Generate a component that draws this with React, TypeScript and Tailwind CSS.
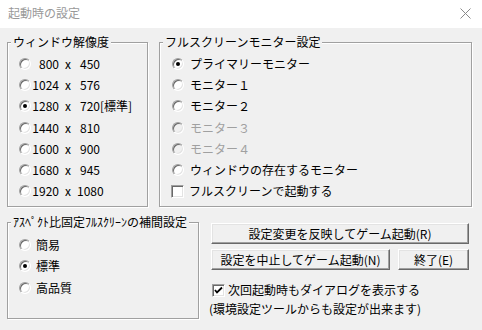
import React from "react";

const FONT = "font-['Noto_Sans_CJK_JP','Noto_Sans_CJK_SC',sans-serif]";

function Radio({ checked = false, disabled = false }: { checked?: boolean; disabled?: boolean }) {
  return (
    <span
      className={
        "shrink-0 w-[12px] h-[12px] rounded-full border border-t-[#a0a0a0] border-l-[#a0a0a0] border-b-white border-r-white shadow-[inset_1px_1px_0_#696969,inset_-1px_-1px_0_#e3e3e3] flex items-center justify-center " +
        (disabled ? "bg-[#f0f0f0]" : "bg-white")
      }
    >
      {checked && <span className="w-[4px] h-[4px] rounded-full bg-black" />}
    </span>
  );
}

function Check({ checked = false }: { checked?: boolean }) {
  return (
    <span className="shrink-0 w-[13px] h-[13px] bg-white border border-t-[#a0a0a0] border-l-[#a0a0a0] border-b-white border-r-white shadow-[inset_1px_1px_0_#696969,inset_-1px_-1px_0_#e3e3e3] flex items-center justify-center">
      {checked && (
        <svg width="9" height="9" viewBox="0 0 9 9">
          <polyline points="1,4 3,6.5 8,1.5" fill="none" stroke="#000" strokeWidth="1.8" />
        </svg>
      )}
    </span>
  );
}

function Group({
  label,
  className,
  children,
}: {
  label: string;
  className: string;
  children: React.ReactNode;
}) {
  return (
    <div
      className={
        "border border-[#a0a0a0] shadow-[1px_1px_0_0_#ffffff,inset_1px_1px_0_0_#ffffff] flex flex-col " +
        className
      }
    >
      <div className="-mt-[8px] h-[14px] ml-[3px] self-start px-[2px] bg-[#f0f0f0] leading-[14px] whitespace-nowrap">
        {label}
      </div>
      {children}
    </div>
  );
}

function Button({ className, children }: { className: string; children: React.ReactNode }) {
  return (
    <div
      className={
        "h-[21px] bg-[#f0f0f0] border border-t-white border-l-white border-r-[#696969] border-b-[#696969] shadow-[inset_-1px_-1px_0_#a0a0a0,inset_1px_1px_0_#e3e3e3] flex items-center justify-center leading-[14px] " +
        className
      }
    >
      {children}
    </div>
  );
}

const resolutions: [string, string, boolean?][] = [
  ["800", "450"],
  ["1024", "576"],
  ["1280", "720", true],
  ["1440", "810"],
  ["1600", "900"],
  ["1680", "945"],
  ["1920", "1080"],
];

const monitors: { label: string; checked?: boolean; disabled?: boolean }[] = [
  { label: "プライマリーモニター", checked: true },
  { label: "モニター１" },
  { label: "モニター２" },
  { label: "モニター３", disabled: true },
  { label: "モニター４", disabled: true },
  { label: "ウィンドウの存在するモニター" },
];

export default function App() {
  return (
    <div className={"w-[482px] h-[330px] bg-[#f0f0f0] flex flex-col text-[12px] text-black overflow-hidden " + FONT}>
      {/* title bar */}
      <div className="h-[28px] bg-white flex items-center justify-between pl-[8px] pr-[11px] shrink-0">
        <span className="text-[12px] text-[#999999] leading-[14px] -mt-[2px]">起動時の設定</span>
        <svg width="11" height="11" viewBox="0 0 11 11" className="-mt-[2px]">
          <path d="M0.5 0.5 L10.5 10.5 M10.5 0.5 L0.5 10.5" stroke="#8a8a8a" strokeWidth="1" fill="none" />
        </svg>
      </div>

      {/* row 1 */}
      <div className="flex pl-[7px] gap-[11px] mt-[14px]">
        <Group label="ウィンドウ解像度" className="w-[141px] h-[165px]">
          <div className="flex flex-col mt-[4px]">
            {resolutions.map(([a, b, std]) => (
              <div key={a} className="h-[21.3px] flex items-center">
                <span className="ml-[11px]">
                  <Radio checked={!!std} />
                </span>
                <span className="w-[28px] text-right leading-[14px]">{a}</span>
                <span className="w-[18px] text-center leading-[14px]">x</span>
                <span className="w-[23px] text-right leading-[14px]">{b}</span>
                {std && <span className="leading-[14px] whitespace-nowrap">[標準]</span>}
              </div>
            ))}
          </div>
        </Group>

        <Group label="フルスクリーンモニター設定" className="w-[313px] h-[165px]">
          <div className="flex flex-col mt-[4px]">
            {monitors.map((m) => (
              <div key={m.label} className="h-[21.3px] flex items-center">
                <span className="ml-[12px]">
                  <Radio checked={m.checked} disabled={m.disabled} />
                </span>
                <span className={"ml-[6px] leading-[14px] " + (m.disabled ? "text-[#a0a0a0]" : "")}>{m.label}</span>
              </div>
            ))}
            <div className="h-[21.3px] flex items-center">
              <span className="ml-[11px]">
                <Check />
              </span>
              <span className="ml-[5px] leading-[14px]">フルスクリーンで起動する</span>
            </div>
          </div>
        </Group>
      </div>

      {/* row 2 */}
      <div className="flex pl-[7px] mt-[15px]">
        <Group label="ｱｽﾍﾟｸﾄ比固定ﾌﾙｽｸﾘｰﾝの補間設定" className="w-[192px] h-[97px] shrink-0">
          <div className="flex flex-col mt-[5px]">
            {[
              { label: "簡易" },
              { label: "標準", checked: true },
              { label: "高品質" },
            ].map((r) => (
              <div key={r.label} className="h-[21.5px] flex items-center">
                <span className="ml-[11px]">
                  <Radio checked={r.checked} />
                </span>
                <span className="ml-[5px] leading-[14px]">{r.label}</span>
              </div>
            ))}
          </div>
        </Group>

        <div className="ml-[12px] mt-[1px] flex flex-col w-[258px]">
          <Button className="w-[258px]">設定変更を反映してゲーム起動(R)</Button>
          <div className="flex mt-[5px]">
            <Button className="w-[179px]">設定を中止してゲーム起動(N)</Button>
            <Button className="w-[71px] ml-[8px]">終了(E)</Button>
          </div>
          <div className="flex items-center h-[14px] mt-[13px] ml-[1px]">
            <Check checked />
            <span className="ml-[3px] leading-[14px] whitespace-nowrap">次回起動時もダイアログを表示する</span>
          </div>
          <div className="h-[16px] mt-[4px] -ml-[2px] leading-[16px] whitespace-nowrap">
            (環境設定ツールからも設定が出来ます)
          </div>
        </div>
      </div>
    </div>
  );
}
